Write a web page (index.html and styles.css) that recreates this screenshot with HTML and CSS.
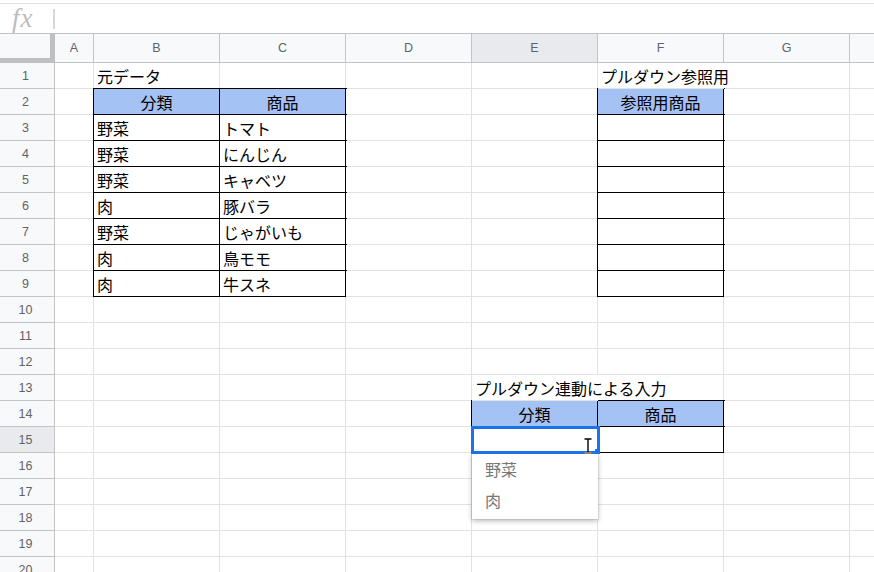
FILE: index.html
```html
<!DOCTYPE html>
<html lang="ja">
<head>
<meta charset="utf-8">
<title>プルダウン連動</title>
<link rel="stylesheet" href="styles.css">
</head>
<body>
<div class="fbar"><span class="fx">fx</span><span class="fsep"></span></div>
<div class="sheet">
<div class="corner"></div><div class="h">A</div><div class="h">B</div><div class="h">C</div><div class="h">D</div><div class="h hs">E</div><div class="h">F</div><div class="h">G</div><div class="h"></div>

<div class="r">1</div><div class="c"></div><div class="c t">元データ</div><div class="c"></div><div class="c"></div><div class="c"></div><div class="c t ov">プルダウン参照用</div><div class="c"></div><div class="c"></div>

<div class="r">2</div><div class="c"></div><div class="c t b hd">分類</div><div class="c t b hd">商品</div><div class="c"></div><div class="c"></div><div class="c t b hd">参照用商品</div><div class="c"></div><div class="c"></div>

<div class="r">3</div><div class="c"></div><div class="c t b">野菜</div><div class="c t b">トマト</div><div class="c"></div><div class="c"></div><div class="c b"></div><div class="c"></div><div class="c"></div>

<div class="r">4</div><div class="c"></div><div class="c t b">野菜</div><div class="c t b">にんじん</div><div class="c"></div><div class="c"></div><div class="c b"></div><div class="c"></div><div class="c"></div>

<div class="r">5</div><div class="c"></div><div class="c t b">野菜</div><div class="c t b">キャベツ</div><div class="c"></div><div class="c"></div><div class="c b"></div><div class="c"></div><div class="c"></div>

<div class="r">6</div><div class="c"></div><div class="c t b">肉</div><div class="c t b">豚バラ</div><div class="c"></div><div class="c"></div><div class="c b"></div><div class="c"></div><div class="c"></div>

<div class="r">7</div><div class="c"></div><div class="c t b">野菜</div><div class="c t b">じゃがいも</div><div class="c"></div><div class="c"></div><div class="c b"></div><div class="c"></div><div class="c"></div>

<div class="r">8</div><div class="c"></div><div class="c t b">肉</div><div class="c t b">鳥モモ</div><div class="c"></div><div class="c"></div><div class="c b"></div><div class="c"></div><div class="c"></div>

<div class="r">9</div><div class="c"></div><div class="c t b">肉</div><div class="c t b">牛スネ</div><div class="c"></div><div class="c"></div><div class="c b"></div><div class="c"></div><div class="c"></div>

<div class="r">10</div><div class="c"></div><div class="c"></div><div class="c"></div><div class="c"></div><div class="c"></div><div class="c"></div><div class="c"></div><div class="c"></div>

<div class="r">11</div><div class="c"></div><div class="c"></div><div class="c"></div><div class="c"></div><div class="c"></div><div class="c"></div><div class="c"></div><div class="c"></div>

<div class="r">12</div><div class="c"></div><div class="c"></div><div class="c"></div><div class="c"></div><div class="c"></div><div class="c"></div><div class="c"></div><div class="c"></div>

<div class="r">13</div><div class="c"></div><div class="c"></div><div class="c"></div><div class="c"></div><div class="c t ov">プルダウン連動による入力</div><div class="c"></div><div class="c"></div><div class="c"></div>

<div class="r">14</div><div class="c"></div><div class="c"></div><div class="c"></div><div class="c"></div><div class="c t b hd">分類</div><div class="c t b hd">商品</div><div class="c"></div><div class="c"></div>

<div class="r rs">15</div><div class="c"></div><div class="c"></div><div class="c"></div><div class="c"></div><div class="c b sc"><div class="sel"><span class="handle"></span></div><svg class="ibeam" width="8" height="16" viewBox="0 0 8 16"><path d="M0.5 1H7.5M4 1V15" stroke="#000" stroke-width="1.4" fill="none"/><path d="M0.5 15H7.5" stroke="#c8923c" stroke-width="1.4" fill="none"/></svg><div class="dd"><div class="ddi">野菜</div><div class="ddi">肉</div></div></div><div class="c b"></div><div class="c"></div><div class="c"></div>

<div class="r">16</div><div class="c"></div><div class="c"></div><div class="c"></div><div class="c"></div><div class="c"></div><div class="c"></div><div class="c"></div><div class="c"></div>

<div class="r">17</div><div class="c"></div><div class="c"></div><div class="c"></div><div class="c"></div><div class="c"></div><div class="c"></div><div class="c"></div><div class="c"></div>

<div class="r">18</div><div class="c"></div><div class="c"></div><div class="c"></div><div class="c"></div><div class="c"></div><div class="c"></div><div class="c"></div><div class="c"></div>

<div class="r">19</div><div class="c"></div><div class="c"></div><div class="c"></div><div class="c"></div><div class="c"></div><div class="c"></div><div class="c"></div><div class="c"></div>

<div class="r">20</div><div class="c"></div><div class="c"></div><div class="c"></div><div class="c"></div><div class="c"></div><div class="c"></div><div class="c"></div><div class="c"></div>
</div>
</body>
</html>
```

FILE: styles.css
```css
html, body {
  margin: 0;
  padding: 0;
}

body {
  width: 874px;
  height: 572px;
  overflow: hidden;
  background: #fff;
  font-family: "Liberation Sans", "Noto Sans CJK JP", sans-serif;
}

.fbar {
  margin-top: 3px;
  height: 29px;
  border-top: 1px solid #e1e1e1;
  border-bottom: 1px solid #c4c4c4;
  display: flex;
  align-items: center;
}

.fx {
  margin-left: 12px;
  width: 28px;
  font-family: "Liberation Serif", serif;
  font-style: italic;
  font-size: 27px;
  line-height: 1;
  color: #bdbdbd;
  letter-spacing: 1px;
}

.fsep {
  width: 2px;
  height: 20px;
  margin-left: 13px;
  background: #d6d6d6;
}

.sheet {
  display: grid;
  grid-template-columns: 55px 39px repeat(7, 126px);
  grid-template-rows: 29px;
  grid-auto-rows: 26px;
}

.c, .h, .r, .corner {
  box-sizing: border-box;
  min-width: 0;
  border-right: 1px solid #e2e2e2;
  border-bottom: 1px solid #e2e2e2;
  background: #fff;
}

.h, .r {
  background: #f8f9fa;
  border-right-color: #c4c4c4;
  border-bottom-color: #c4c4c4;
  color: #5f6368;
  font-size: 12.5px;
  display: flex;
  align-items: center;
  justify-content: center;
}

.r {
  padding-right: 3px;
  padding-top: 1px;
}

.hs, .rs {
  background: #e8eaed;
}

.corner {
  background: #f8f9fa;
  border-right: 5px solid #c0c0c0;
  border-bottom: 5px solid #c0c0c0;
}

.t {
  padding-left: 3px;
  font-size: 16px;
  line-height: 29px;
  white-space: nowrap;
  color: #000;
}

.hd {
  background: #a4c2f4;
  text-align: center;
  padding-left: 0;
}

.b {
  border-right-color: #000;
  border-bottom-color: #000;
  box-shadow: 0 0 0 1px #000;
}

.ov {
  position: relative;
  z-index: 1;
  border-right-color: #fff;
}

.sc {
  position: relative;
  box-shadow: none;
}

.sel {
  position: absolute;
  left: -1px;
  top: -1px;
  width: 129px;
  height: 28px;
  box-sizing: border-box;
  border: 3px solid #1a73e8;
  z-index: 3;
}

.handle {
  position: absolute;
  right: -3px;
  bottom: -3px;
  width: 5px;
  height: 5px;
  background: #1a73e8;
}

.ibeam {
  position: absolute;
  left: 112px;
  top: 11px;
  z-index: 4;
}

.dd {
  position: absolute;
  left: 0;
  top: 26px;
  width: 126px;
  height: 66px;
  box-sizing: border-box;
  padding-top: 2px;
  background: #fff;
  box-shadow: 0 2px 5px rgba(0, 0, 0, 0.28), 0 0 0 1px rgba(0, 0, 0, 0.06);
  z-index: 2;
}

.ddi {
  height: 31px;
  line-height: 31px;
  padding-left: 13px;
  font-size: 16px;
  color: #777;
  white-space: nowrap;
}
```
